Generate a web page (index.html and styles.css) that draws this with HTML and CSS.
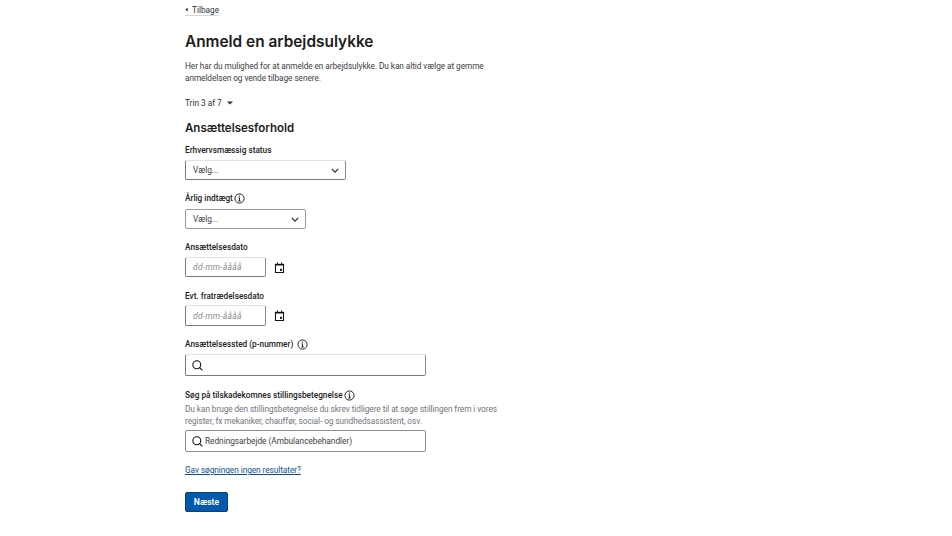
FILE: index.html
```html
<!DOCTYPE html>
<html lang="da">
<head>
<meta charset="utf-8">
<title>Anmeld en arbejdsulykke</title>
<link rel="stylesheet" href="styles.css">
</head>
<body>
<main class="page">
  <a class="back" href="#"><svg class="back-icon" viewBox="0 0 4 6"><path d="M3.5 0.5v5L0.5 3z"/></svg>Tilbage</a>
  <h1>Anmeld en arbejdsulykke</h1>
  <p class="intro">Her har du mulighed for at anmelde en arbejdsulykke. Du kan altid vælge at gemme anmeldelsen og vende tilbage senere.</p>
  <div class="step">Trin 3 af 7<svg class="step-icon" viewBox="0 0 6 4"><path d="M0 0.5h6L3 3.5z"/></svg></div>
  <h2>Ansættelsesforhold</h2>

  <div class="field f-status">
    <div class="label semi">Erhvervsmæssig status</div>
    <div class="control select wide">Vælg...<svg class="chev" viewBox="0 0 10 6"><path d="M1 1l4 4 4-4"/></svg></div>
  </div>

  <div class="field f-income">
    <div class="label semi">Årlig indtægt<svg class="info" viewBox="0 0 12 12"><circle cx="6" cy="6" r="5"/><path d="M6 5.3v3.4M4.7 8.7h2.6M4.9 5.3H6"/><circle class="dot" cx="5.9" cy="3.4" r=".8"/></svg></div>
    <div class="control select mid">Vælg...<svg class="chev" viewBox="0 0 10 6"><path d="M1 1l4 4 4-4"/></svg></div>
  </div>

  <div class="field f-date">
    <div class="label semi">Ansættelsesdato</div>
    <div class="date-row"><div class="control date">dd-mm-åååå</div><svg class="cal" viewBox="0 0 12 12"><path class="cal-head" d="M1 2h10v1.8H1z"/><path d="M1.6 2.6h8.8v8.8H1.6zM3.7 .6v2M8.3 .6v2"/><rect class="dot" x="6.6" y="7.4" width="2.2" height="2.2"/></svg></div>
  </div>

  <div class="field f-date2">
    <div class="label semi">Evt. fratrædelsesdato</div>
    <div class="date-row tall"><div class="control date">dd-mm-åååå</div><svg class="cal" viewBox="0 0 12 12"><path class="cal-head" d="M1 2h10v1.8H1z"/><path d="M1.6 2.6h8.8v8.8H1.6zM3.7 .6v2M8.3 .6v2"/><rect class="dot" x="6.6" y="7.4" width="2.2" height="2.2"/></svg></div>
  </div>

  <div class="field f-place">
    <div class="label semi">Ansættelsessted (p-nummer)<svg class="info spaced" viewBox="0 0 12 12"><circle cx="6" cy="6" r="5"/><path d="M6 5.3v3.4M4.7 8.7h2.6M4.9 5.3H6"/><circle class="dot" cx="5.9" cy="3.4" r=".8"/></svg></div>
    <div class="control search"><svg class="lens" viewBox="0 0 12 12"><circle cx="5.2" cy="5.2" r="4.3"/><path d="M8.3 8.3l3 3"/></svg></div>
  </div>

  <div class="field f-title">
    <div class="label semi">Søg på tilskadekomnes stillingsbetegnelse<svg class="info" viewBox="0 0 12 12"><circle cx="6" cy="6" r="5"/><path d="M6 5.3v3.4M4.7 8.7h2.6M4.9 5.3H6"/><circle class="dot" cx="5.9" cy="3.4" r=".8"/></svg></div>
    <p class="help">Du kan bruge den stillingsbetegnelse du skrev tidligere til at søge stillingen frem i vores register, fx mekaniker, chauffør, social- og sundhedsassistent, osv.</p>
    <div class="control search"><svg class="lens" viewBox="0 0 12 12"><circle cx="5.2" cy="5.2" r="4.3"/><path d="M8.3 8.3l3 3"/></svg>Redningsarbejde (Ambulancebehandler)</div>
  </div>

  <a class="no-results" href="#">Gav søgningen ingen resultater?</a>
  <button class="next" type="button">Næste</button>
</main>
</body>
</html>
```
FILE: styles.css
```css
* { box-sizing: border-box; }
html, body { margin: 0; background: #fff; }
body { font-family: Roboto, "Liberation Sans", sans-serif; font-size: 8.25px; color: #2a2d33; }
.page { display: flex; flex-direction: column; align-items: flex-start; width: 330px; margin-left: 185px; padding-top: 5px; height: 536px; overflow: hidden; }
.back { display: flex; align-items: center; height: 11px; color: #2b3240; text-decoration: none; border-bottom: 1px solid #d5d6de; padding-bottom: 1px; line-height: 10px; }
.back-icon { width: 3px; height: 5px; margin-right: 4px; fill: #1a1a1a; }
h1 { margin: 16px 0 0; font-size: 15.4px; line-height: 20px; font-weight: 600; color: #1c1c1c; font-family: Inter, Roboto, sans-serif; }
.intro { margin: 8px 0 0; line-height: 12px; color: #3a3d44; width: 305px; letter-spacing: -0.06px; }
.step { display: flex; align-items: center; margin-top: 13px; line-height: 12px; color: #2b3240; }
.step-icon { width: 6px; height: 4px; margin-left: 5px; fill: #333; }
h2 { margin: 12px 0 0; font-size: 11.5px; line-height: 14px; font-weight: 600; color: #1c1c1c; font-family: Inter, Roboto, sans-serif; }
.field { display: flex; flex-direction: column; align-items: flex-start; }
.label { display: flex; align-items: center; line-height: 12px; color: #222; }
.semi { font-weight: 500; }
.control { display: flex; align-items: center; background: #fff; border: 1px solid #e2e2e2; border-bottom-color: #77797c; border-left-color: #77797c; border-right-color: #8a8a8a; border-radius: 2px; color: #3a3d44; }
.select { justify-content: space-between; height: 20px; padding: 0 6px 0 7px; margin-top: 4px; }
.wide { width: 161px; }
.mid { width: 121px; margin-top: 5px; border-color: #9a9a9a; }
.date-row { display: flex; align-items: center; margin-top: 4px; }
.date { width: 81px; height: 20px; padding-left: 7px; font-style: italic; font-size: 8.6px; letter-spacing: 0.2px; color: #8a8d92; }
.tall { margin-top: 3px; }
.tall .date { height: 21px; }
.search { width: 241px; height: 22px; margin-top: 4px; padding-left: 6px; }
.f-status { margin-top: 9px; }
.f-income { margin-top: 12px; }
.f-date { margin-top: 12px; }
.f-date2 { margin-top: 13px; }
.f-place { margin-top: 12px; }
.f-title { margin-top: 13px; }
.help { margin: 2px 0 0; line-height: 12px; width: 325px; color: #70747c; letter-spacing: -0.06px; }
.f-title .search { margin-top: 3px; border-color: #8d8d8d; }
.chev { width: 8px; height: 5px; fill: none; stroke: #222; stroke-width: 1.4; }
.info { width: 11px; height: 11px; margin-left: 1px; fill: none; stroke: #111; stroke-width: 1; }
.info.spaced { margin-left: 4px; }
.info .dot { fill: #111; stroke: none; }
.cal { width: 11px; height: 11px; margin-left: 8px; fill: none; stroke: #111; stroke-width: 1.1; }
.cal .dot, .cal .cal-head { fill: #111; stroke: none; }
.lens { width: 11px; height: 11px; margin-right: 2px; fill: none; stroke: #111; stroke-width: 1.15; }
.no-results { margin-top: 12px; line-height: 12px; font-size: 8.25px; letter-spacing: -0.05px; color: #0a4f96; text-decoration: underline; }
.next { margin-top: 16px; width: 43px; height: 20px; padding: 0; border: 1px solid #063f82; border-radius: 2px; background: #0559ad; color: #fff; font: 600 8.6px Roboto, sans-serif; }
```
